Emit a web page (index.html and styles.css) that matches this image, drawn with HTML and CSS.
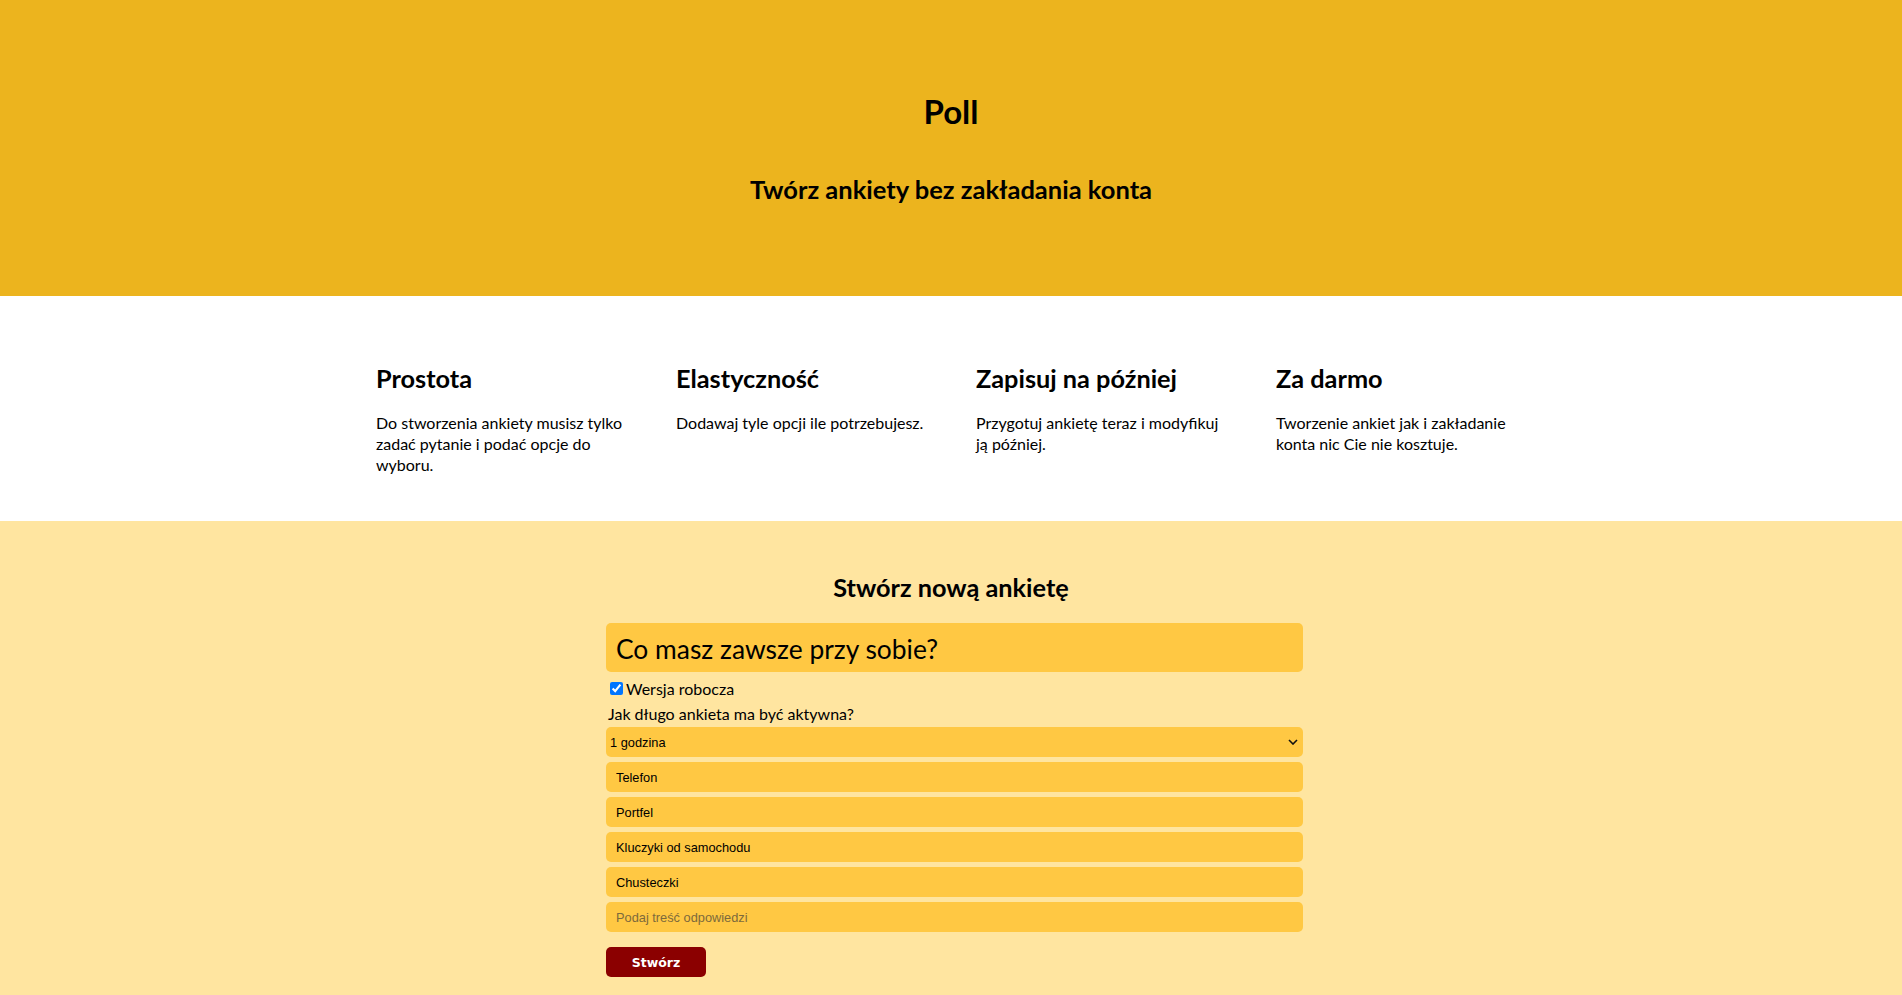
FILE: index.html
```html
<!DOCTYPE html>
<html lang="pl">
<head>
<meta charset="utf-8">
<title>Poll</title>
<link rel="stylesheet" href="styles.css">
</head>
<body>
<header class="hero">
  <h1 class="hero-title">Poll</h1>
  <h2 class="hero-sub">Twórz ankiety bez zakładania konta</h2>
</header>

<section class="features">
  <div class="features-grid">
    <div class="feature">
      <h2 class="feature-title">Prostota</h2>
      <p class="feature-text">Do stworzenia ankiety musisz tylko zadać pytanie i podać opcje do wyboru.</p>
    </div>
    <div class="feature">
      <h2 class="feature-title">Elastyczność</h2>
      <p class="feature-text">Dodawaj tyle opcji ile potrzebujesz.</p>
    </div>
    <div class="feature">
      <h2 class="feature-title">Zapisuj na później</h2>
      <p class="feature-text">Przygotuj ankietę teraz i modyfikuj ją później.</p>
    </div>
    <div class="feature">
      <h2 class="feature-title">Za darmo</h2>
      <p class="feature-text">Tworzenie ankiet jak i zakładanie konta nic Cie nie kosztuje.</p>
    </div>
  </div>
</section>

<section class="create">
  <h2 class="create-title">Stwórz nową ankietę</h2>
  <form class="poll-form">
    <input class="question" type="text" value="Co masz zawsze przy sobie?">
    <label class="draft"><input class="draft-check" type="checkbox" checked>Wersja robocza</label>
    <div class="duration-label">Jak długo ankieta ma być aktywna?</div>
    <div class="select-wrap">
      <select class="duration">
        <option>1 godzina</option>
        <option>1 dzień</option>
        <option>1 tydzień</option>
      </select>
      <svg class="select-arrow" width="10" height="6" viewBox="0 0 10 6"><path d="M1 1l4 4 4-4" fill="none" stroke="#111" stroke-width="1.6"/></svg>
    </div>
    <input class="option" type="text" value="Telefon">
    <input class="option" type="text" value="Portfel">
    <input class="option" type="text" value="Kluczyki od samochodu">
    <input class="option" type="text" value="Chusteczki">
    <input class="option" type="text" placeholder="Podaj treść odpowiedzi">
    <button class="submit" type="button">Stwórz</button>
  </form>
</section>
</body>
</html>
```

FILE: styles.css
```css
* { box-sizing: border-box; }

body {
  margin: 0;
  font-family: Lato, "Noto Sans", sans-serif;
  color: #000;
  background: #ffe5a0;
}

.hero {
  height: 296px;
  background: #ecb41e;
  display: flex;
  flex-direction: column;
  align-items: center;
  padding-top: 91px;
}

.hero-title {
  margin: 0;
  font-size: 33px;
  line-height: 40px;
  font-weight: 700;
}

.hero-sub {
  margin: 42px 0 0;
  font-size: 25.5px;
  line-height: 32px;
  font-weight: 700;
}

.features {
  height: 225px;
  background: #fff;
  padding-top: 67px;
}

.features-grid {
  width: 1150px;
  margin: 0 auto;
  display: grid;
  grid-template-columns: repeat(4, 250px);
  column-gap: 50px;
}

.feature-title {
  margin: 0;
  font-size: 25.3px;
  line-height: 30px;
  font-weight: 700;
}

.feature-text {
  margin: 19px 0 0;
  font-size: 16px;
  line-height: 21px;
}

.create {
  padding: 51px 0 20px;
}

.create-title {
  margin: 0;
  text-align: center;
  font-size: 25.3px;
  line-height: 30px;
  font-weight: 700;
}

.poll-form {
  width: 704px;
  margin: 21px auto 0;
  padding-left: 7px;
  display: flex;
  flex-direction: column;
}

.question {
  height: 49px;
  border: none;
  border-radius: 5px;
  background: #ffc843;
  padding: 2px 10px 0;
  font-family: Lato, "Noto Sans", sans-serif;
  font-size: 26.4px;
  color: #000;
  outline: none;
}

.draft {
  display: flex;
  align-items: center;
  margin-top: 5px;
  height: 22px;
  font-size: 16px;
}

.draft-check {
  margin: 0 3px 0 4px;
  width: 13px;
  height: 13px;
}

.duration-label {
  margin-top: 4px;
  height: 22px;
  line-height: 22px;
  padding-left: 2px;
  font-size: 16px;
}

.select-wrap {
  position: relative;
  margin-top: 2px;
}

.duration {
  display: block;
  width: 100%;
  height: 30px;
  border: none;
  border-radius: 5px;
  background: #ffc843;
  appearance: none;
  -webkit-appearance: none;
  padding: 0 4px;
  font-family: "Liberation Sans", Arial, sans-serif;
  font-size: 12.8px;
  color: #000;
  outline: none;
}

.select-arrow {
  position: absolute;
  right: 5px;
  top: 12px;
}

.option {
  margin-top: 5px;
  height: 30px;
  border: none;
  border-radius: 5px;
  background: #ffc843;
  padding: 0 10px;
  font-family: "Liberation Sans", Arial, sans-serif;
  font-size: 12.8px;
  color: #000;
  outline: none;
}

.option::placeholder {
  color: #7d6a3c;
}

.submit {
  margin-top: 15px;
  width: 100px;
  height: 30px;
  border: none;
  border-radius: 5px;
  background: #8b0000;
  color: #fff;
  font-family: "DejaVu Sans", Verdana, sans-serif;
  font-weight: 700;
  font-size: 12.5px;
  cursor: pointer;
}
```
